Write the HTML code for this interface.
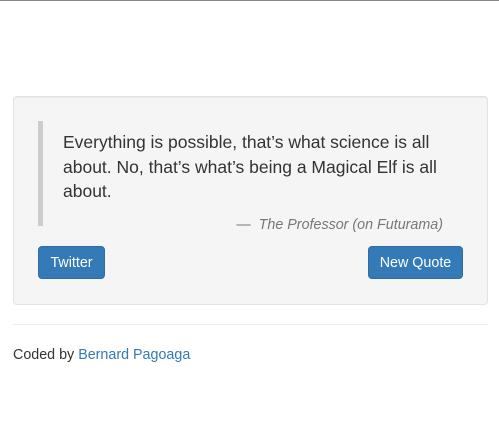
<!DOCTYPE html>
<html><head><style>
body{margin:0;width:499px;height:429px;background:#fff;font-family:"Liberation Sans",sans-serif;color:#333;font-size:14px;border-top:1px solid #888;box-sizing:border-box;position:relative;overflow:hidden}
.well{position:absolute;left:13px;top:95px;width:473px;height:207px;background:#f5f5f5;border:1px solid #e3e3e3;border-radius:4px;box-shadow:inset 0 1px 1px rgba(0,0,0,.05)}
.bar{position:absolute;left:24px;top:24px;width:5px;height:105px;background:#ccc}
.q{position:absolute;left:49px;top:33px;width:400px;font-size:17.5px;line-height:24.5px;color:#333;margin:0}
.by{position:absolute;right:44px;top:120px;font-size:14.3px;color:#777;font-style:italic}
.btn{position:absolute;top:149px;height:33px;background:#337ab7;border:1px solid #2e6da4;border-radius:4px;color:#fff;font-size:14.3px;line-height:32px;text-align:center;box-sizing:border-box}
hr{position:absolute;left:13px;top:323px;width:475px;margin:0;border:0;border-top:1px solid #eee}
.foot{position:absolute;left:13px;top:346px;font-size:14.3px}
a{color:#337ab7;text-decoration:none}
</style></head><body>
<div class="well">
<div class="bar"></div>
<p class="q">Everything is possible, that’s what science is all about. No, that’s what’s being a Magical Elf is all about.</p>
<div class="by"><span style="font-style:normal">—&nbsp;</span> The Professor (on Futurama)</div>
<div class="btn" style="left:24px;width:67px">Twitter</div>
<div class="btn" style="left:354px;width:95px">New Quote</div>
</div>
<hr>
<div class="foot">Coded by <a>Bernard Pagoaga</a></div>
</body></html>
